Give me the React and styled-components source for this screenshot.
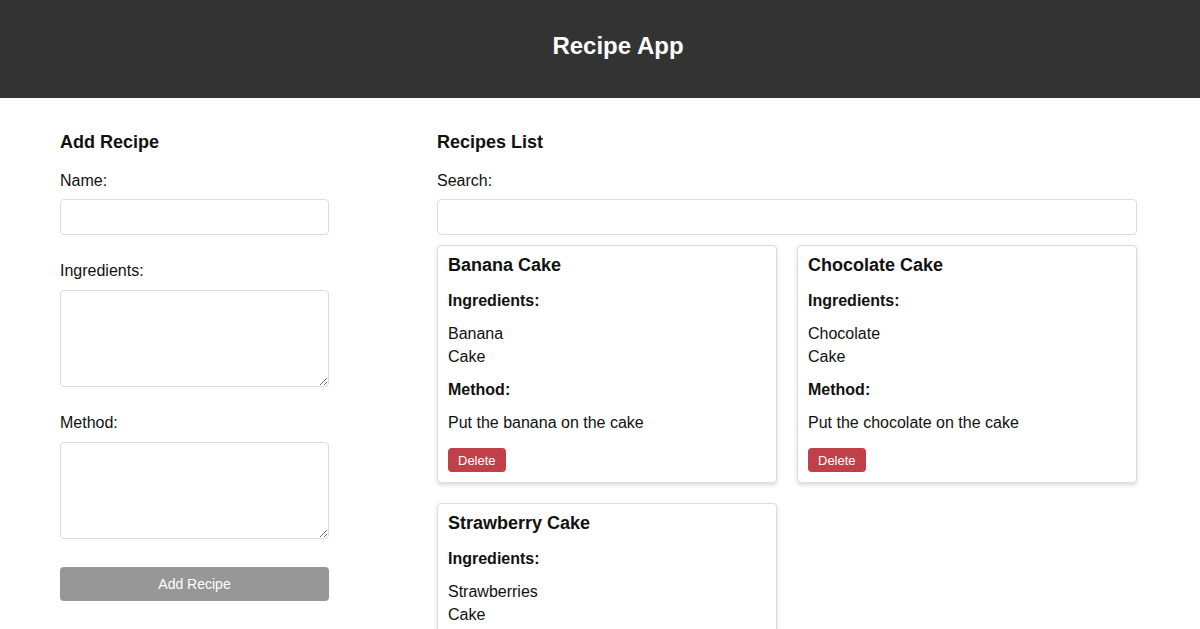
import React, { useState } from 'react'
import styled, { createGlobalStyle } from 'styled-components'

const GlobalStyle = createGlobalStyle`
  body {
    margin: 0;
    font-family: "Liberation Sans", Arial, sans-serif;
    color: #111;
    background: #fff;
  }
  * {
    box-sizing: border-box;
  }
`

const Header = styled.header`
  height: 98px;
  background-color: #333;
  display: flex;
  justify-content: center;
  align-items: center;
  padding-left: 36px;
`

const Title = styled.h1`
  margin: 0;
  color: #fff;
  font-size: 24px;
  font-weight: 700;
  line-height: 28px;
  padding-bottom: 6px;
`

const Main = styled.main`
  display: flex;
  align-items: flex-start;
  gap: 108px;
  padding: 0 60px;
`

const Column = styled.section`
  width: ${(p) => p.width}px;
  display: flex;
  flex-direction: column;
  flex-shrink: 0;
`

const SectionTitle = styled.h2`
  margin: 34px 0 0;
  font-size: 18px;
  font-weight: 700;
  line-height: 21px;
`

const Label = styled.label`
  display: block;
  font-size: 16px;
  line-height: 18px;
  margin-top: ${(p) => p.top || 19}px;
`

const Input = styled.input`
  display: block;
  width: 100%;
  height: 36px;
  margin-top: 9px;
  border: 1px solid #ddd;
  border-radius: 4px;
  font-family: inherit;
  font-size: 16px;
  padding: 0 8px;
`

const TextArea = styled.textarea`
  display: block;
  width: 100%;
  height: 97px;
  margin-top: 10px;
  border: 1px solid #ddd;
  border-radius: 4px;
  font-family: inherit;
  font-size: 16px;
  padding: 8px;
`

const SubmitButton = styled.button`
  display: block;
  width: 100%;
  height: 34px;
  margin-top: 28px;
  border: none;
  border-radius: 4px;
  background-color: #979797;
  color: #fff;
  font-family: inherit;
  font-size: 14px;
`

const CardGrid = styled.div`
  display: grid;
  grid-template-columns: 340px 340px;
  gap: 20px;
  margin-top: 10px;
`

const Card = styled.article`
  border: 1px solid #ddd;
  border-radius: 4px;
  padding: 9px 10px 10px;
  box-shadow: 0 2px 4px rgba(0, 0, 0, 0.15);
  background: #fff;
`

const CardTitle = styled.h3`
  margin: 0;
  font-size: 18px;
  font-weight: 700;
  line-height: 21px;
`

const CardSubtitle = styled.h4`
  margin: ${(p) => p.top}px 0 0;
  font-size: 16px;
  font-weight: 700;
  line-height: 18px;
`

const CardText = styled.p`
  margin: 12px 0 0;
  font-size: 16px;
  line-height: 23px;
`

const DeleteButton = styled.button`
  display: block;
  margin-top: 14px;
  height: 24px;
  padding: 0 10px;
  border: none;
  border-radius: 4px;
  background-color: #c0404a;
  color: #fff;
  font-family: inherit;
  font-size: 13px;
`

const initialRecipes = [
  { id: 1, name: 'Banana Cake', ingredients: ['Banana', 'Cake'], method: 'Put the banana on the cake' },
  { id: 2, name: 'Chocolate Cake', ingredients: ['Chocolate', 'Cake'], method: 'Put the chocolate on the cake' },
  { id: 3, name: 'Strawberry Cake', ingredients: ['Strawberries', 'Cake'], method: 'Put the strawberries on the cake' },
]

export default function App() {
  const [recipes, setRecipes] = useState(initialRecipes)
  const [search, setSearch] = useState('')

  const filtered = recipes.filter((r) => r.name.toLowerCase().includes(search.toLowerCase()))

  return (
    <>
      <GlobalStyle />
      <Header>
        <Title>Recipe App</Title>
      </Header>
      <Main>
        <Column width={269}>
          <SectionTitle>Add Recipe</SectionTitle>
          <Label>Name:</Label>
          <Input type="text" />
          <Label top={27}>Ingredients:</Label>
          <TextArea />
          <Label top={27}>Method:</Label>
          <TextArea />
          <SubmitButton>Add Recipe</SubmitButton>
        </Column>
        <Column width={700}>
          <SectionTitle>Recipes List</SectionTitle>
          <Label>Search:</Label>
          <Input type="text" value={search} onChange={(e) => setSearch(e.target.value)} />
          <CardGrid>
            {filtered.map((r) => (
              <Card key={r.id}>
                <CardTitle>{r.name}</CardTitle>
                <CardSubtitle top={16}>Ingredients:</CardSubtitle>
                <CardText>
                  {r.ingredients.map((ing, i) => (
                    <React.Fragment key={i}>
                      {i > 0 && <br />}
                      {ing}
                    </React.Fragment>
                  ))}
                </CardText>
                <CardSubtitle top={13}>Method:</CardSubtitle>
                <CardText>{r.method}</CardText>
                <DeleteButton onClick={() => setRecipes(recipes.filter((x) => x.id !== r.id))}>
                  Delete
                </DeleteButton>
              </Card>
            ))}
          </CardGrid>
        </Column>
      </Main>
    </>
  )
}
